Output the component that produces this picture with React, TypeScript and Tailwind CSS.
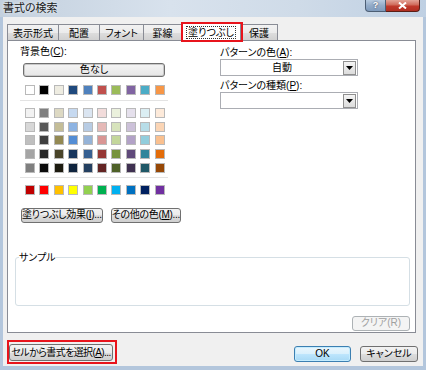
const font = "font-['Liberation_Sans','Noto_Sans_CJK_JP',sans-serif] [font-feature-settings:'palt']";

const themeRow = ["#FFFFFF", "#000000", "#EEECE1", "#1F497D", "#4F81BD", "#C0504D", "#9BBB59", "#8064A2", "#4BACC6", "#F79646"];

const tintRows = [
  ["#F2F2F2", "#7F7F7F", "#DDD9C3", "#C6D9F0", "#DBE5F1", "#F2DCDB", "#EBF1DD", "#E5E0EC", "#DBEEF3", "#FDEADA"],
  ["#D8D8D8", "#595959", "#C4BD97", "#8DB3E2", "#B8CCE4", "#E5B9B7", "#D7E3BC", "#CCC1D9", "#B7DDE8", "#FBD5B5"],
  ["#BFBFBF", "#3F3F3F", "#938953", "#548DD4", "#95B3D7", "#D99694", "#C3D69B", "#B2A2C7", "#92CDDC", "#FAC08F"],
  ["#A5A5A5", "#262626", "#494429", "#17365D", "#366092", "#953734", "#76923C", "#5F497A", "#31859B", "#E36C09"],
  ["#7F7F7F", "#0C0C0C", "#1D1B10", "#0F243E", "#244061", "#632423", "#4F6128", "#3F3151", "#205867", "#974806"],
];

const standardRow = ["#C00000", "#FF0000", "#FFC000", "#FFFF00", "#92D050", "#00B050", "#00B0F0", "#0070C0", "#002060", "#7030A0"];

const tabs = [
  { label: "表示形式", w: "w-[52px]" },
  { label: "配置", w: "w-[42px]" },
  { label: "フォント", w: "w-[45px]" },
  { label: "罫線", w: "w-[39px]" },
  { label: "塗りつぶし", w: "w-[60px]", active: true },
  { label: "保護", w: "w-[38px]" },
];

function Swatches({ rows }: { rows: string[][] }) {
  return (
    <div className="ml-[5px] grid grid-cols-[repeat(10,10px)] gap-x-[4.4px] gap-y-[3.7px]">
      {rows.flat().map((c, i) => (
        <div key={i} className="h-[10px] w-[10px] border border-[#b9b9b9]" style={{ backgroundColor: c }} />
      ))}
    </div>
  );
}

function Btn({
  children,
  className = "",
  disabled = false,
  primary = false,
}: {
  children: React.ReactNode;
  className?: string;
  disabled?: boolean;
  primary?: boolean;
}) {
  const look = disabled
    ? "border-[#adb2b5] bg-[#f4f4f4] text-[#a0a0a0]"
    : primary
      ? "border-[#3c7fb1] bg-[linear-gradient(to_bottom,#eaf6fd_0%,#d9f0fc_50%,#bee6fd_50%,#a7d9f5_100%)] text-black shadow-[inset_0_0_0_1px_#c4ecfe]"
      : "border-[#707070] bg-[linear-gradient(to_bottom,#f2f2f2_0%,#ebebeb_50%,#dddddd_50%,#cfcfcf_100%)] text-black";
  return (
    <div
      className={`flex items-center justify-center whitespace-nowrap rounded-[3px] border text-[10px] leading-none ${look} ${className}`}
    >
      {children}
    </div>
  );
}

function Combo({ value }: { value?: string }) {
  return (
    <div className="flex h-[17px] w-[138px] items-center border border-[#abadb3] bg-white pr-[1px]">
      <div className="flex-1 text-center text-[10px] leading-none">{value}</div>
      <div className="flex h-[14px] w-[13px] items-center justify-center border border-[#8f8f8f] bg-[linear-gradient(to_bottom,#f4f4f4,#dcdcdc)]">
        <svg width="7" height="4" viewBox="0 0 7 4">
          <path d="M0 0h7L3.5 4z" fill="#000" />
        </svg>
      </div>
    </div>
  );
}

export default function App() {
  return (
    <div className={`flex h-[370px] w-[426px] flex-col bg-[#b3c6dc] text-black ${font}`}>
      {/* title bar */}
      <div className="flex h-[17px] items-start bg-[linear-gradient(to_right,#c3d0de,#d8e2ed_40%,#cfdbe8_70%,#bfd0e3)]">
        <div className="ml-[3px] mt-[2px] text-[11px] leading-[12px] text-[#1a1a1a] [text-shadow:0_0_4px_#fff]">書式の検索</div>
        <div className="ml-auto mr-[6px] flex">
          <div className="flex h-[12px] w-[21px] items-center justify-center rounded-bl-[4px] border border-t-0 border-[#4c5e74] bg-[linear-gradient(to_bottom,#b8cbe0,#94acc8_50%,#7f9bbd)] text-[9px] font-bold leading-none text-white [text-shadow:0_0_2px_#334]">
            ?
          </div>
          <div className="flex h-[12px] w-[34px] items-center justify-center rounded-br-[4px] border border-l-0 border-t-0 border-[#5a1e16] bg-[linear-gradient(to_bottom,#e3a497,#cf6a5a_45%,#c0392b_55%,#b02f22)]">
            <svg width="9" height="7" viewBox="0 0 9 7">
              <path d="M1 0.5L8 6.5M8 0.5L1 6.5" stroke="#fff" strokeWidth="2" />
            </svg>
          </div>
        </div>
      </div>

      {/* client area */}
      <div className="ml-[3px] flex h-[349px] w-[420px] flex-col bg-[#f0f0f0]">
        {/* tabs */}
        <div className="mb-[-1px] ml-[4px] mt-[5px] flex h-[19px] items-end">
          {tabs.map((t) =>
            t.active ? (
              <div
                key={t.label}
                className={`relative z-10 -ml-[1px] flex h-[19px] items-center justify-center border border-b-0 border-[#898c95] bg-white text-[10px] ${t.w}`}
              >
                <span className="border border-dotted border-[#333] px-[1px] leading-[11px]">{t.label}</span>
                <div className="absolute -left-[1px] -top-[1px] h-[20px] w-[62px] border-2 border-[#e8141c]" />
              </div>
            ) : (
              <div
                key={t.label}
                className={`-ml-[1px] flex h-[17px] items-center justify-center border border-b-0 border-[#898c95] bg-[linear-gradient(to_bottom,#f2f2f2,#ebebeb_50%,#dddddd_50%,#cfcfcf)] text-[10px] first:ml-0 ${t.w}`}
              >
                {t.label}
              </div>
            ),
          )}
        </div>

        {/* tab panel */}
        <div className="ml-[4px] flex h-[293px] w-[409px] flex-col border border-[#898c95] bg-white">
          <div className="flex">
            {/* left column */}
            <div className="ml-[12px] flex w-[150px] flex-col">
              <div className="mt-[5px] h-[12px] text-[10px] leading-[12px]">
                背景色(<u>C</u>):
              </div>
              <div className="ml-[3px] mt-[5px] flex h-[14px] w-[142px] items-center justify-center rounded-[3px] border border-[#6f6f6f] bg-[linear-gradient(to_bottom,#f4f4f4,#e6e6e6)] text-[10px] leading-none shadow-[inset_0_0_0_1px_#c9c9c9]">
                色なし
              </div>
              <div className="mt-[8px]">
                <Swatches rows={[themeRow]} />
              </div>
              <div className="mt-[5px] w-[148px] border-t border-[#e3e3e3]" />
              <div className="mt-[7px]">
                <Swatches rows={tintRows} />
              </div>
              <div className="mt-[4px] w-[148px] border-t border-[#e3e3e3]" />
              <div className="mt-[7px]">
                <Swatches rows={[standardRow]} />
              </div>
              <div className="ml-[1px] mt-[13px] flex gap-[8px]">
                <Btn className="h-[15px] w-[84px] tracking-[-0.3px]">
                  塗りつぶし効果(<u>I</u>)...
                </Btn>
                <Btn className="h-[15px] w-[74px] tracking-[-0.3px]">
                  その他の色(<u>M</u>)...
                </Btn>
              </div>
            </div>

            {/* right column */}
            <div className="ml-[50px] flex flex-col">
              <div className="mt-[6px] h-[12px] text-[10px] leading-[12px]">
                パターンの色(<u>A</u>):
              </div>
              <Combo value="自動" />
              <div className="mt-[4px] h-[12px] text-[10px] leading-[12px]">
                パターンの種類(<u>P</u>):
              </div>
              <Combo />
            </div>
          </div>

          {/* sample */}
          <fieldset className="ml-[7px] mt-[29px] h-[54px] w-[395px] rounded-[3px] border border-[#d5dfe5]">
            <legend className="ml-[3px] text-[10px] leading-[12px]">サンプル</legend>
          </fieldset>

          <div className="mr-[5px] mt-[10px] flex justify-end">
            <Btn disabled className="h-[15px] w-[58px]">
              クリア(R)
            </Btn>
          </div>
        </div>

        {/* bottom buttons */}
        <div className="ml-[4px] mr-[5px] mt-[7px] flex items-start justify-between">
          <div className="h-[24px] w-[110px] border-2 border-[#e8141c] pt-[2px]">
            <Btn className="h-[17px] w-[104px] tracking-[-0.6px]">
              セルから書式を選択(<u>A</u>)...
            </Btn>
          </div>
          <div className="mt-[6px] flex gap-[9px]">
            <Btn primary className="h-[16px] w-[57px]">
              OK
            </Btn>
            <Btn className="h-[16px] w-[58px]">キャンセル</Btn>
          </div>
        </div>
      </div>
    </div>
  );
}
